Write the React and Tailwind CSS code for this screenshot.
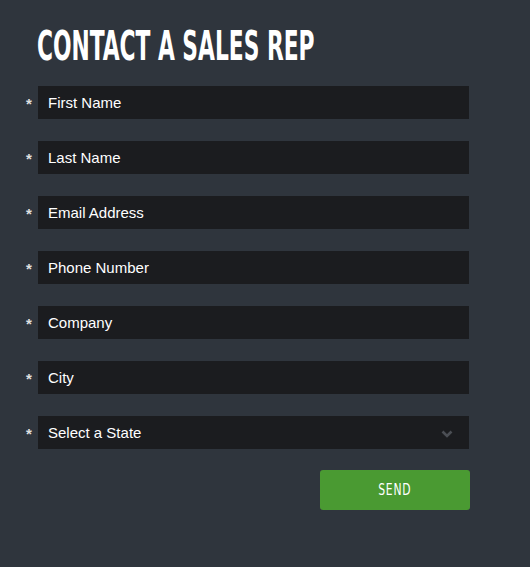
import React from 'react';

const fields = ['First Name', 'Last Name', 'Email Address', 'Phone Number', 'Company', 'City'];

function Row({ children }) {
    return (
        <div className="flex items-center h-[33px]">
            <span className="w-[20px] text-[15px] font-bold text-[#e0e0e0] pl-[8px] pt-[4px]">*</span>
            {children}
        </div>
    );
}

export default function App() {
    return (
        <div className="w-[530px] h-[567px] bg-[#2f353d] pl-[18px] pt-[26px]" style={{ fontFamily: '"Liberation Sans", Arial, sans-serif' }}>
            <h1
                className="ml-[19px] text-white font-bold text-[40px] leading-[40px] origin-left scale-x-[0.605] whitespace-nowrap"
                style={{ fontFamily: '"DejaVu Sans Condensed", "Liberation Sans", sans-serif' }}
            >
                CONTACT A SALES REP
            </h1>
            <div className="mt-[20px] flex flex-col gap-[22px]">
                {fields.map((f) => (
                    <Row key={f}>
                        <div className="w-[431px] h-[33px] bg-[#1b1c1f] flex items-center pl-[10px] pt-[2px] text-[15px] text-white">
                            {f}
                        </div>
                    </Row>
                ))}
                <Row>
                    <div className="w-[431px] h-[33px] bg-[#1b1c1f] flex items-center justify-between pl-[10px] pt-[2px] pr-[16px] text-[15px] text-white">
                        <span>Select a State</span>
                        <svg width="12" height="8" viewBox="0 0 12 8" fill="none">
                            <path d="M1.5 1.5 L6 6 L10.5 1.5" stroke="#4b4e54" strokeWidth="2.6" />
                        </svg>
                    </div>
                </Row>
            </div>
            <div className="w-[452px] flex justify-end mt-[21px]">
                <button className="w-[150px] h-[40px] bg-[#4a9a32] rounded-[3px] text-white">
                    <span
                        className="inline-block text-[15px] tracking-[1px] scale-x-[0.8]"
                        style={{ fontFamily: '"DejaVu Sans Condensed", "Liberation Sans", sans-serif' }}
                    >
                        SEND
                    </span>
                </button>
            </div>
        </div>
    );
}
